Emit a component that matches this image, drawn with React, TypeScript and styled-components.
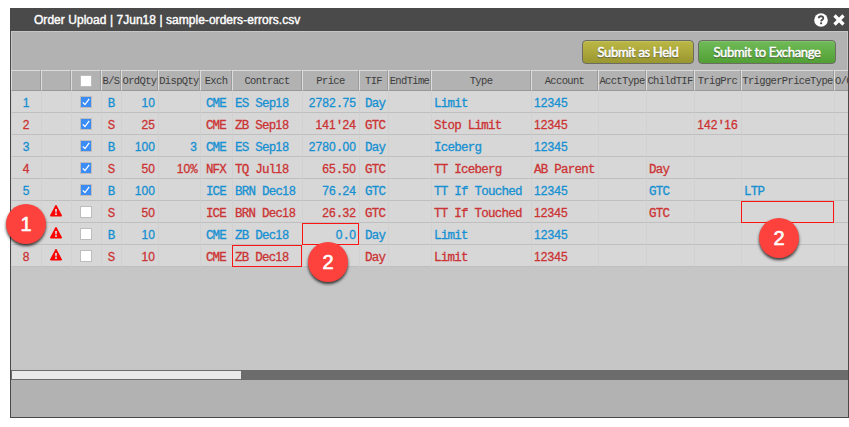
import React from "react";
import styled, { createGlobalStyle, css } from "styled-components";

const Global = createGlobalStyle`
  html, body { margin: 0; background: #fff; overflow: hidden; }
  * { box-sizing: border-box; }
`;

const Page = styled.main`
  position: relative;
  width: 849px;
  height: 427px;
  padding: 8px 0 0 10px;
  overflow: hidden;
`;

const Window = styled.section`
  width: 839px;
  height: 410px;
  display: flex;
  flex-direction: column;
  background: #b2b2b2;
  border: 1px solid #494949;
  border-top: 0;
`;

const TitleBar = styled.header`
  height: 23px;
  flex: none;
  display: flex;
  align-items: center;
  padding: 0 3px 0 23px;
  background: #4a4a4a;
  color: #fff;
`;

const Title = styled.h1`
  flex: 1;
  margin: 0;
  padding-top: 1px;
  font: 400 12px/23px "Liberation Sans", Arial, sans-serif;
  letter-spacing: 0.04px;
  -webkit-text-stroke: 0.4px #fff;
`;

const TitleIcons = styled.div`
  display: flex;
  align-items: center;
  gap: 5px;
`;

const Toolbar = styled.div`
  height: 39px;
  flex: none;
  display: flex;
  justify-content: flex-end;
  gap: 4px;
  padding: 8px 11px 0 0;
  border: 1px solid #c6c6c6;
  border-bottom: 0;
`;

const Button = styled.button<{ $from: string; $to: string; $width: number; $spacing: number }>`
  width: ${(p) => p.$width}px;
  height: 24px;
  padding: 0;
  border: 1px solid #6b6d62;
  border-radius: 4px;
  background: linear-gradient(${(p) => p.$from}, ${(p) => p.$to});
  box-shadow: inset 0 1px 0 rgba(255, 255, 255, 0.12);
  color: #fff;
  font: 400 13px/21px Lato, sans-serif;
  letter-spacing: ${(p) => p.$spacing}px;
  -webkit-text-stroke: 0.5px #fff;
  text-shadow: 0 1px 1px rgba(0, 0, 0, 0.7);
  white-space: nowrap;
`;

const columnLayout = css`
  display: grid;
  grid-template-columns: 30px 30px 30px 20px 37px 42px 32px 70px 57px 29px 43px 100px 67px 48px 48px 47px 93px 80px;
`;

const Grid = styled.div`
  height: 300px;
  flex: none;
  overflow: hidden;
  background: #c6c6c6;
`;

const HeaderRow = styled.div`
  ${columnLayout}
  height: 21px;
  background: #b2b2b2;
`;

const HeaderCell = styled.div<{ $left?: boolean }>`
  height: 21px;
  display: flex;
  align-items: center;
  justify-content: ${(p) => (p.$left ? "flex-start" : "center")};
  border-top: 1px solid #dcdcdc;
  border-left: 1px solid #dcdcdc;
  border-right: 1px solid #9c9c9c;
  border-bottom: 1px solid #999;
  color: #3d3d3d;
  font: 400 10.5px/19px "Liberation Mono", monospace;
  padding-top: 1px;
  letter-spacing: -0.65px;
  white-space: nowrap;
`;

const Row = styled.div<{ $side: string }>`
  ${columnLayout}
  height: 22px;
  background: #d7d7d7;
  color: ${(p) => (p.$side === "B" ? "#1590d2" : "#cc3333")};
`;

const Cell = styled.div<{ $align: string; $error?: boolean }>`
  height: 22px;
  display: flex;
  align-items: center;
  justify-content: ${(p) => p.$align};
  padding: 0 3px 0 2px;
  border-left: 1px solid #d1d1d1;
  border-bottom: 1px solid #bfbfbf;
  font: 400 12px/19px "Liberation Sans", Arial, sans-serif;
  -webkit-text-stroke: 0.3px currentColor;
  white-space: pre;
  ${(p) => p.$error && css`border: 1px solid #ff1414; padding: 0 2px 0 2px;`}
`;

const CellText = styled.span<{ $indent?: boolean }>`
  padding-top: 3px;
  padding-left: ${(p) => (p.$indent ? 3 : 0)}px;
  letter-spacing: 0.07px;
`;

const Mono = styled.span`
  font: 400 12.5px/1 "Liberation Mono", monospace;
  letter-spacing: -0.76px;
`;

const Check = styled.span<{ $on?: boolean }>`
  width: 12px;
  height: 12px;
  display: grid;
  place-items: center;
  background: ${(p) => (p.$on ? "#3b8df5" : "#fff")};
  border: 1px solid #bdbdbd;
`;

const ScrollTrack = styled.div`
  height: 10px;
  flex: none;
  padding: 1px;
  background: #6c6c6c;
`;

const ScrollThumb = styled.div`
  width: 229px;
  height: 8px;
  background: #eaeaea;
`;

const Callout = styled.div<{ $x: number; $y: number }>`
  position: absolute;
  left: ${(p) => p.$x}px;
  top: ${(p) => p.$y}px;
  width: 40px;
  height: 40px;
  border-radius: 50%;
  background: #fd423d;
  box-shadow: 0 2px 3px rgba(0, 0, 0, 0.75);
  color: #fff;
  font: 400 20px/41px "Liberation Sans", Arial, sans-serif;
  -webkit-text-stroke: 0.6px #fff;
  text-align: center;
`;

const Tick = () => (
  <svg width="10" height="10" viewBox="0 0 9 9" fill="none" stroke="#fff" strokeWidth="1.1">
    <path d="M1.6 4.8 3.6 6.8 7.4 1.6" />
  </svg>
);

const WarningIcon = styled.svg`
  margin-bottom: 1px;
`;

const Warning = () => (
  <WarningIcon width="12" height="12" viewBox="0 0 12 12">
    <path d="M5.3.6Q6 -.4 6.7.6L11.9 10.3Q12.2 11.5 11.1 11.5H.9Q-.2 11.5.1 10.3Z" fill="#ff0000" />
    <path d="M5 4h2l-.3 3.5H5.3ZM5.1 8.2h1.8V10H5.1Z" fill="#d7d7d7" />
  </WarningIcon>
);

const Help = () => (
  <svg width="14" height="14" viewBox="0 0 14 14">
    <circle cx="7" cy="7" r="6.8" fill="#fff" />
    <path d="M4.7 5.3C4.8 2.5 9.4 2.6 9.3 5.2 9.2 6.8 7.2 6.7 7.1 8.4" fill="none" stroke="#4a4a4a" strokeWidth="1.8" />
    <path d="M6.1 9.4h2v1.8h-2z" fill="#4a4a4a" />
  </svg>
);

const Close = () => (
  <svg width="12" height="12" viewBox="0 0 12 12" stroke="#fff" strokeWidth="3.3">
    <path d="M1.5 1.5 10.5 10.5M10.5 1.5 1.5 10.5" />
  </svg>
);

const headers = ["", "", "check", "B/S", "OrdQty", "DispQty", "Exch", "Contract", "Price", "TIF", "EndTime", "Type", "Account", "AcctType", "ChildTIF", "TrigPrc", "TriggerPriceType", "O/C"];

const C = "center";
const L = "flex-start";
const R = "flex-end";
const aligns = [C, C, C, C, R, R, C, L, R, L, L, L, L, L, L, C, L, L];
const TIF_COLUMN = 9;

type Order = { label: string; values: string[]; valid: boolean; error?: number };

const orders: Order[] = [
  { label: "1", valid: true, values: ["B", "10", "", "CME", "ES Sep18", "2782.75", "Day", "", "Limit", "12345", "", "", "", "", ""] },
  { label: "2", valid: true, values: ["S", "25", "", "CME", "ZB Sep18", "141'24", "GTC", "", "Stop Limit", "12345", "", "", "142'16", "", ""] },
  { label: "3", valid: true, values: ["B", "100", "3", "CME", "ES Sep18", "2780.00", "Day", "", "Iceberg", "12345", "", "", "", "", ""] },
  { label: "4", valid: true, values: ["S", "50", "10%", "NFX", "TQ Jul18", "65.50", "GTC", "", "TT Iceberg", "AB Parent", "", "Day", "", "", ""] },
  { label: "5", valid: true, values: ["B", "100", "", "ICE", "BRN Dec18", "76.24", "GTC", "", "TT If Touched", "12345", "", "GTC", "", "LTP", ""] },
  { label: "", valid: false, error: 16, values: ["S", "50", "", "ICE", "BRN Dec18", "26.32", "GTC", "", "TT If Touched", "12345", "", "GTC", "", "", ""] },
  { label: "", valid: false, error: 8, values: ["B", "10", "", "CME", "ZB Dec18", "0.0", "Day", "", "Limit", "12345", "", "", "", "", ""] },
  { label: "8", valid: false, error: 7, values: ["S", "10", "", "CME", "ZB Dec18", "", "Day", "", "Limit", "12345", "", "", "", "", ""] },
];

const MixedText = ({ text, indent }: { text: string; indent?: boolean }) => (
  <CellText $indent={indent}>
    {text.split(/(\d+)/).map((part, i) => (part === "" || /^\d/.test(part) ? part : <Mono key={i}>{part}</Mono>))}
  </CellText>
);

const OrderRow = ({ order }: { order: Order }) => (
  <Row $side={order.values[0]}>
    <Cell $align={C}><MixedText text={order.label} /></Cell>
    <Cell $align={C}>{!order.valid && <Warning />}</Cell>
    <Cell $align={C}><Check $on={order.valid}>{order.valid && <Tick />}</Check></Cell>
    {order.values.map((value, i) => (
      <Cell key={i} $align={aligns[i + 3]} $error={order.error === i + 3}>
        <MixedText text={value} indent={i + 3 === TIF_COLUMN} />
      </Cell>
    ))}
  </Row>
);

export default function App() {
  return (
    <Page>
      <Global />
      <Window>
        <TitleBar>
          <Title>Order Upload | 7Jun18 | sample-orders-errors.csv</Title>
          <TitleIcons><Help /><Close /></TitleIcons>
        </TitleBar>
        <Toolbar>
          <Button $from="#bcb845" $to="#9a9631" $width={112} $spacing={-0.33}>Submit as Held</Button>
          <Button $from="#70bb58" $to="#529f35" $width={138} $spacing={-0.32}>Submit to Exchange</Button>
        </Toolbar>
        <Grid>
          <HeaderRow>
            {headers.map((h, i) => (
              <HeaderCell key={i} $left={i === 17}>{h === "check" ? <Check /> : h}</HeaderCell>
            ))}
          </HeaderRow>
          {orders.map((order, i) => <OrderRow key={i} order={order} />)}
        </Grid>
        <ScrollTrack><ScrollThumb /></ScrollTrack>
      </Window>
      <Callout $x={6} $y={204}>1</Callout>
      <Callout $x={308} $y={242}>2</Callout>
      <Callout $x={759} $y={218}>2</Callout>
    </Page>
  );
}
